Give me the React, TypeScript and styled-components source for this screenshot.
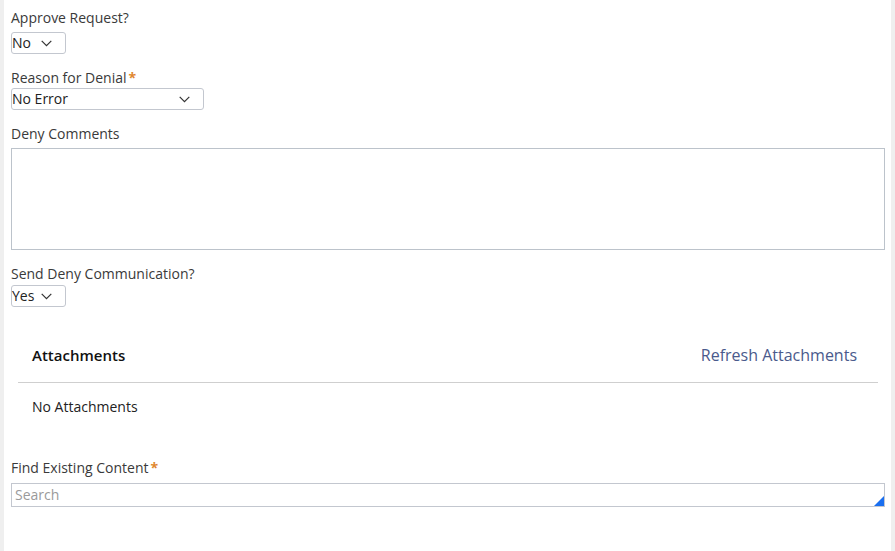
import React from "react";
import styled, { createGlobalStyle } from "styled-components";

const GlobalStyle = createGlobalStyle`
  html, body { margin: 0; padding: 0; background: #ffffff; }
  body { font-family: "Open Sans", "Noto Sans", Arial, sans-serif; color: #333; }
  * { box-sizing: border-box; }
`;

const Page = styled.div`
  width: 895px;
  min-height: 551px;
  background: #fff;
  border-left: 4px solid #efefef;
  border-right: 4px solid #efefef;
  padding: 8px 6px 0 7px;
  display: flex;
  flex-direction: column;
`;

const Field = styled.div<{ $gap?: number; $mt?: number }>`
  display: flex;
  flex-direction: column;
  gap: ${(p) => p.$gap ?? 2}px;
  margin-top: ${(p) => p.$mt ?? 0}px;
`;

const Label = styled.label`
  font-size: 14px;
  line-height: 20px;
  color: #3a3a3a;
  display: flex;
  align-items: center;
`;

const Required = styled.span`
  color: #e0872f;
  font-size: 14px;
  margin-left: 2px;
  font-weight: 700;
`;

const SelectBox = styled.div<{ $width: number }>`
  width: ${(p) => p.$width}px;
  height: 22px;
  border: 1px solid #c3c7cf;
  border-radius: 3px;
  display: flex;
  align-items: center;
  justify-content: space-between;
  padding: 0 13px 0 0;
  font-size: 14px;
  color: #222;
  background: #fff;
`;

const SelectText = styled.span`
  line-height: 20px;
`;

const TextArea = styled.div`
  width: 100%;
  height: 102px;
  border: 1px solid #bcc3cb;
  background: #fff;
`;

const Attachments = styled.section`
  margin: 20px 7px 0 7px;
  display: flex;
  flex-direction: column;
`;

const AttachHeader = styled.div`
  height: 56px;
  border-bottom: 1px solid #cfcfcf;
  display: flex;
  align-items: center;
  justify-content: space-between;
  padding: 0 21px 0 14px;
`;

const AttachTitle = styled.h3`
  margin: 0;
  font-size: 15px;
  font-weight: 600;
  color: #111;
`;

const RefreshLink = styled.a`
  font-size: 16px;
  color: #4a5a8c;
  text-decoration: none;
  cursor: pointer;
`;

const AttachBody = styled.div`
  padding: 14px 14px 0 14px;
  font-size: 14px;
  line-height: 20px;
  color: #222;
`;

const SearchBox = styled.div`
  position: relative;
  width: 100%;
  height: 24px;
  border: 1px solid #c3c7cf;
  display: flex;
  align-items: center;
  padding: 0 0 2px 3px;
  font-size: 14px;
  color: #9a9a9a;
`;

const Corner = styled.span`
  position: absolute;
  right: 0;
  bottom: 0;
  width: 0;
  height: 0;
  border-style: solid;
  border-width: 0 0 10px 10px;
  border-color: transparent transparent #1a6ff0 transparent;
`;

const Chevron = () => (
  <svg width="11" height="7" viewBox="0 0 11 7" fill="none">
    <path d="M0.7 0.8 L5.5 5.6 L10.3 0.8" stroke="#333" strokeWidth="1.2" />
  </svg>
);

const Select = ({ value, width }: { value: string; width: number }) => (
  <SelectBox $width={width}>
    <SelectText>{value}</SelectText>
    <Chevron />
  </SelectBox>
);

export default function App() {
  return (
    <>
      <GlobalStyle />
      <Page>
        <Field $gap={4}>
          <Label>Approve Request?</Label>
          <Select value="No" width={55} />
        </Field>
        <Field $mt={14} $gap={0}>
          <Label>
            Reason for Denial<Required>*</Required>
          </Label>
          <Select value="No Error" width={193} />
        </Field>
        <Field $mt={14} $gap={4}>
          <Label>Deny Comments</Label>
          <TextArea />
        </Field>
        <Field $mt={14} $gap={1}>
          <Label>Send Deny Communication?</Label>
          <Select value="Yes" width={55} />
        </Field>
        <Attachments>
          <AttachHeader>
            <AttachTitle>Attachments</AttachTitle>
            <RefreshLink>Refresh Attachments</RefreshLink>
          </AttachHeader>
          <AttachBody>No Attachments</AttachBody>
        </Attachments>
        <Field $mt={41} $gap={5}>
          <Label>
            Find Existing Content<Required>*</Required>
          </Label>
          <SearchBox>
            Search
            <Corner />
          </SearchBox>
        </Field>
      </Page>
    </>
  );
}
